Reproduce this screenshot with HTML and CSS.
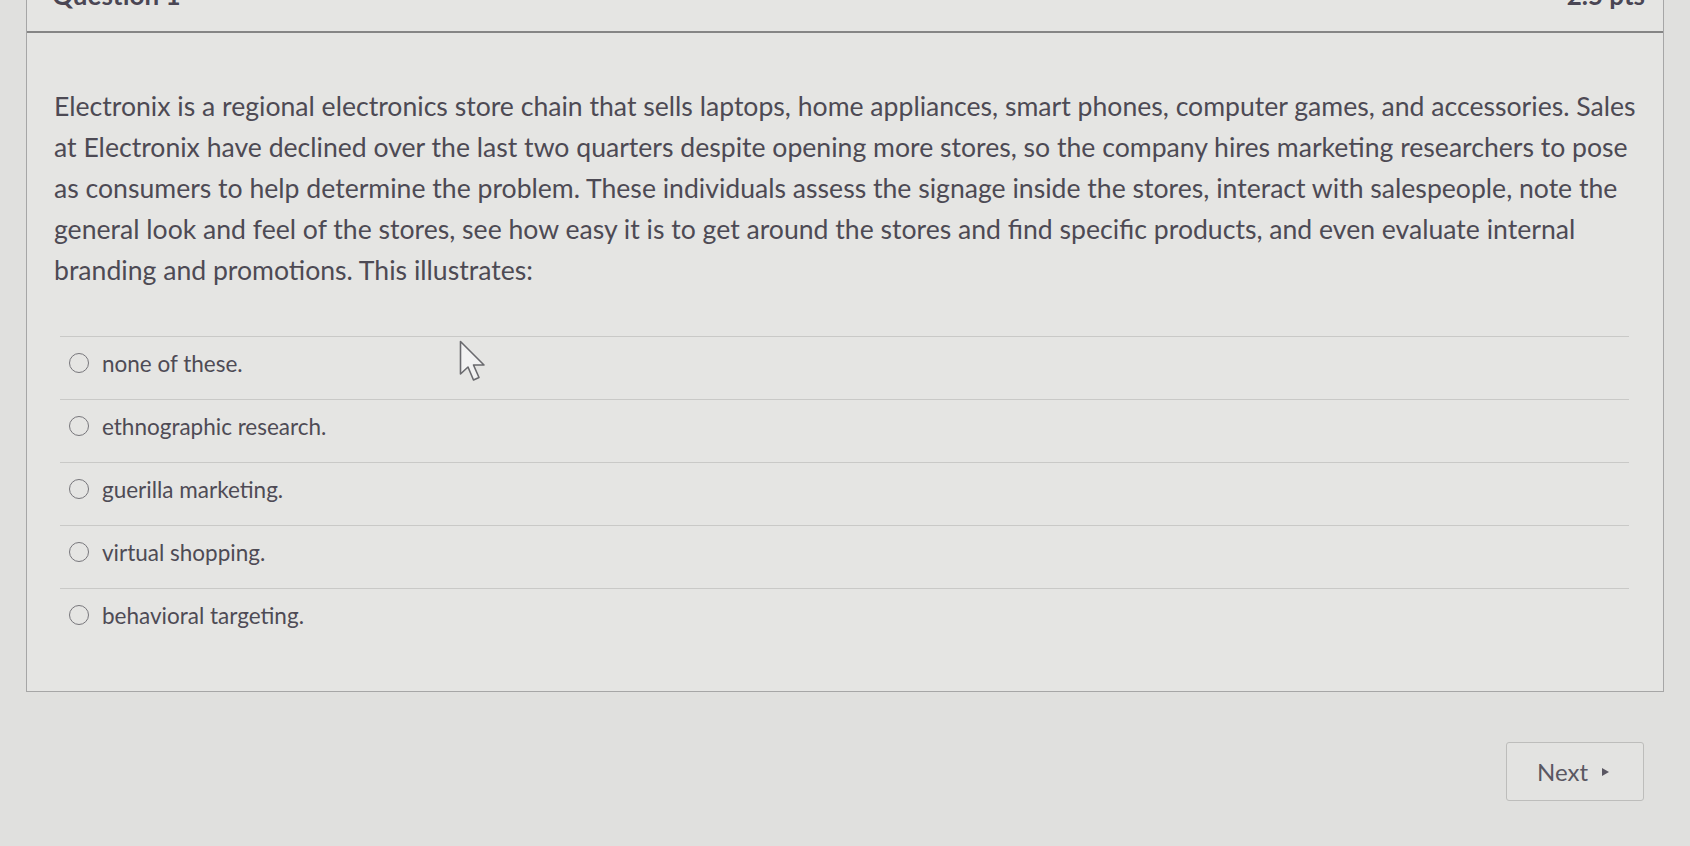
FILE: index.html
```html
<!DOCTYPE html>
<html lang="en">
<head>
<meta charset="utf-8">
<title>Question 1</title>
<link rel="stylesheet" href="styles.css">
</head>
<body>
<div class="page">
  <div class="question">
    <div class="q-header">
      <span class="q-title">Question 1</span>
      <span class="q-pts">2.5 pts</span>
    </div>
    <div class="q-body">
      <p class="q-text">Electronix is a regional electronics store chain that sells laptops, home appliances, smart phones, computer games, and accessories. Sales at Electronix have declined over the last two quarters despite opening more stores, so the company hires marketing researchers to pose as consumers to help determine the problem. These individuals assess the signage inside the stores, interact with salespeople, note the general look and feel of the stores, see how easy it is to get around the stores and find specific products, and even evaluate internal branding and promotions. This illustrates:</p>
      <ul class="answers">
        <li class="answer"><span class="radio"></span><span class="label">none of these.</span></li>
        <li class="answer"><span class="radio"></span><span class="label">ethnographic research.</span></li>
        <li class="answer"><span class="radio"></span><span class="label">guerilla marketing.</span></li>
        <li class="answer"><span class="radio"></span><span class="label">virtual shopping.</span></li>
        <li class="answer"><span class="radio"></span><span class="label">behavioral targeting.</span></li>
      </ul>
    </div>
  </div>
  <div class="actions">
    <button class="next-btn">Next <span class="tri"></span></button>
  </div>
  <svg class="cursor" width="32" height="48" viewBox="0 0 32 48">
    <path d="M1.5 1.5 L1.5 34 L9 27 L14.5 40 L20 37.5 L14.5 25 L25 25 Z" fill="#f2f2f2" stroke="#6a6a6e" stroke-width="1.6" stroke-linejoin="round"/>
  </svg>
</div>
</body>
</html>
```
FILE: styles.css
```css
html, body {
  margin: 0;
  padding: 0;
  background: #e0e0de;
  overflow: hidden;
}
body {
  font-family: Lato, "Open Sans", sans-serif;
  color: #4d4a54;
}
.page {
  position: relative;
  display: flow-root;
  width: 1690px;
  height: 846px;
  padding-left: 26px;
  box-sizing: border-box;
}
.question {
  width: 1638px;
  margin-top: -30px;
  border: 1px solid #a6a6a6;
  border-top: none;
  background: #e5e5e3;
  box-sizing: border-box;
}
.q-header {
  height: 63px;
  box-sizing: border-box;
  padding: 12px 18px 0 25px;
  display: flex;
  justify-content: space-between;
  align-items: flex-start;
  border-bottom: 2px solid #858585;
  font-weight: 700;
  font-size: 26px;
  line-height: 26px;
  color: #4a4654;
}
.q-body {
  padding: 53px 6px 40px 27px;
}
.q-text {
  margin: 0;
  font-size: 26.6px;
  line-height: 41px;
}
.answers {
  list-style: none;
  margin: 45px 28px 0 6px;
  padding: 0;
}
.answer {
  display: flex;
  align-items: center;
  height: 63px;
  border-top: 1px solid #c9c9c7;
  padding: 0 0 10px 9px;
  box-sizing: border-box;
  font-size: 22.5px;
  color: #4e4b55;
}
.radio {
  width: 18px;
  height: 18px;
  border: 1.5px solid #77767b;
  border-radius: 50%;
  margin-right: 13px;
  flex: none;
}
.actions {
  display: flex;
  justify-content: flex-end;
  width: 1638px;
  padding-right: 20px;
  box-sizing: border-box;
  margin-top: 50px;
}
.next-btn {
  width: 138px;
  height: 59px;
  border: 1px solid #bdbdbb;
  border-radius: 3px;
  background: #e3e3e1;
  font-family: Lato, "Open Sans", sans-serif;
  font-size: 24px;
  color: #5a5762;
  display: flex;
  align-items: center;
  justify-content: center;
  gap: 14px;
  padding: 0 4px 0 0;
}
.tri {
  width: 0;
  height: 0;
  border-top: 4.5px solid transparent;
  border-bottom: 4.5px solid transparent;
  border-left: 7px solid #5a5762;
}
.cursor {
  position: absolute;
  left: 459px;
  top: 340px;
}
```
